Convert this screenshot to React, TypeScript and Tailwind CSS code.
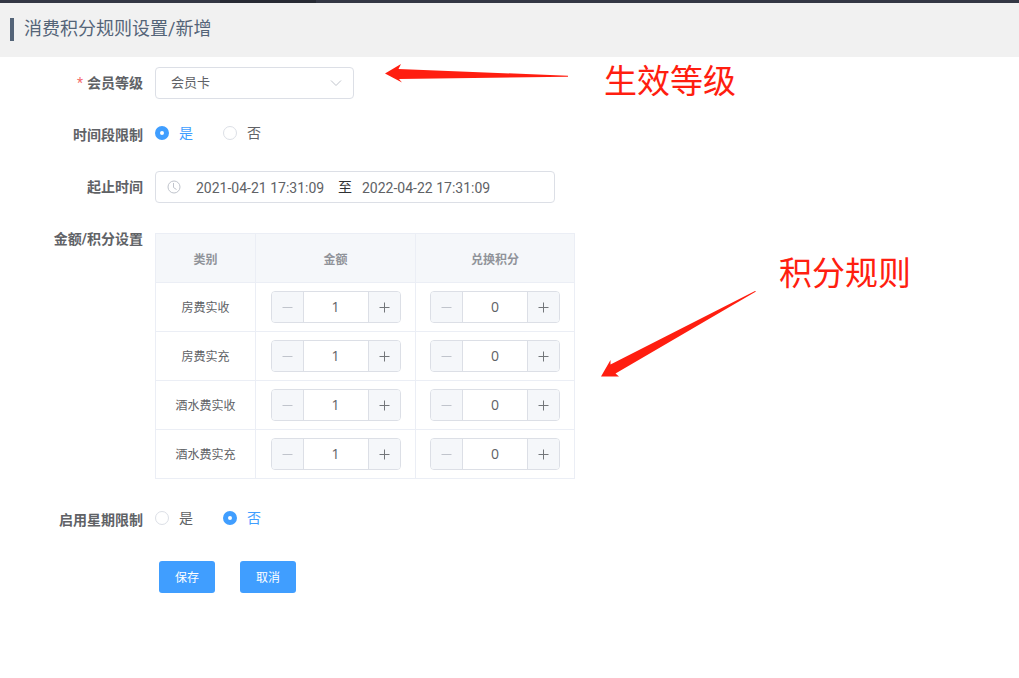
import React, { useState } from 'react';

interface StepperProps {
  label: string;
  value: number;
  min: number;
  onChange: (value: number) => void;
}

const Stepper: React.FC<StepperProps> = ({ label, value, min, onChange }) => {
  return (
    <div className="mx-auto flex h-8 w-[130px] overflow-hidden rounded border border-[#dcdfe6] bg-white">
      <button
        type="button"
        aria-label={`${label} 减少`}
        disabled={value <= min}
        onClick={() => onChange(value - 1)}
        className="flex w-8 shrink-0 items-center justify-center border-r border-[#dcdfe6] bg-[#f5f7fa] text-[#606266] disabled:text-[#c0c4cc]"
      >
        <svg width="11" height="11" viewBox="0 0 11 11" stroke="currentColor">
          <path d="M0.5 5.5h10" />
        </svg>
      </button>
      <input
        type="text"
        inputMode="numeric"
        aria-label={label}
        value={value}
        onChange={(e) => onChange(Number(e.target.value) || min)}
        className="w-full min-w-0 text-center font-['Open_Sans',sans-serif] text-sm text-[#606266] outline-none"
      />
      <button
        type="button"
        aria-label={`${label} 增加`}
        onClick={() => onChange(value + 1)}
        className="flex w-8 shrink-0 items-center justify-center border-l border-[#dcdfe6] bg-[#f5f7fa] text-[#73767a]"
      >
        <svg width="11" height="11" viewBox="0 0 11 11" stroke="currentColor">
          <path d="M0.5 5.5h10M5.5 0.5v10" />
        </svg>
      </button>
    </div>
  );
};

interface YesNoProps {
  name: string;
  value: string;
  onChange: (value: string) => void;
}

const YesNo: React.FC<YesNoProps> = ({ name, value, onChange }) => (
  <div role="radiogroup" aria-labelledby={`${name}-label`} className="flex h-7 items-center gap-[30px]">
    {['是', '否'].map((option) => (
      <label key={option} className="flex cursor-pointer items-center gap-2.5 text-sm">
        <input
          type="radio"
          name={name}
          checked={value === option}
          onChange={() => onChange(option)}
          className="peer size-3.5 appearance-none rounded-full border border-[#dcdfe6] bg-white checked:border-5 checked:border-[#409eff]"
        />
        <span className="text-[#606266] peer-checked:text-[#409eff]">{option}</span>
      </label>
    ))}
  </div>
);

interface FormRowProps {
  label: string;
  id?: string;
  htmlFor?: string;
  required?: boolean;
  children: React.ReactNode;
}

const FormRow: React.FC<FormRowProps> = ({ label, id, htmlFor, required, children }) => (
  <div className="flex gap-3">
    <label
      id={id}
      htmlFor={htmlFor}
      className="w-[143px] shrink-0 text-right text-sm leading-8 font-bold text-[#606266]"
    >
      {required && <span className="mr-1 font-normal text-[#f56c6c]">*</span>}
      {label}
    </label>
    <div className="min-w-0 flex-1">{children}</div>
  </div>
);

const initialRules = [
  { name: '房费实收', amount: 1, points: 0 },
  { name: '房费实充', amount: 1, points: 0 },
  { name: '酒水费实收', amount: 1, points: 0 },
  { name: '酒水费实充', amount: 1, points: 0 },
];

const cell = 'border-r border-b border-[#ebeef5]';

const App: React.FC = () => {
  const [timeLimit, setTimeLimit] = useState('是');
  const [weekLimit, setWeekLimit] = useState('否');
  const [start, setStart] = useState('2021-04-21 17:31:09');
  const [end, setEnd] = useState('2022-04-22 17:31:09');
  const [rules, setRules] = useState(initialRules);

  const updateRule = (index: number, patch: { amount?: number; points?: number }) => {
    setRules(rules.map((rule, i) => (i === index ? { ...rule, ...patch } : rule)));
  };

  return (
    <div
      lang="zh-CN"
      className="relative min-h-screen overflow-hidden bg-white font-[Roboto,'Noto_Sans_CJK_SC',sans-serif]"
    >
      <div className="h-[3px] bg-[#333744]">
        <div className="ml-[220px] h-full w-24 bg-[#272a33]" />
      </div>
      <header className="flex h-[54px] items-center bg-[#f1f1f1] pb-0.5 pl-2.5">
        <h1 className="flex items-center gap-2.5 text-lg leading-6 text-[#546478]">
          <span className="h-[23px] w-1 bg-[#546478]" />
          消费积分规则设置/新增
        </h1>
      </header>

      <form className="flex flex-col gap-5 pt-2.5" onSubmit={(e) => e.preventDefault()}>
        <FormRow label="会员等级" htmlFor="level" required>
          <div className="relative w-full max-w-[199px]">
            <select
              id="level"
              className="block h-8 w-full appearance-none rounded border border-[#dcdfe6] bg-white pr-8 pl-[15px] text-[13px] text-[#606266] outline-none"
            >
              <option>会员卡</option>
            </select>
            <svg
              className="pointer-events-none absolute top-3 right-3"
              width="12"
              height="8"
              viewBox="0 0 12 8"
              fill="none"
              stroke="#c0c4cc"
            >
              <path d="M1 1.500l5 5 5-5" />
            </svg>
          </div>
        </FormRow>

        <FormRow label="时间段限制" id="time-limit-label">
          <YesNo name="time-limit" value={timeLimit} onChange={setTimeLimit} />
        </FormRow>

        <FormRow label="起止时间" htmlFor="start">
          <div className="flex h-8 w-full max-w-[400px] items-center rounded border border-[#dcdfe6] pl-[11px] text-sm text-[#606266]">
            <svg className="shrink-0" width="14" height="14" viewBox="0 0 14 14" fill="none" stroke="#c0c4cc">
              <circle cx="7" cy="7" r="6" />
              <path d="M6.5 3v4.500l3 2" />
            </svg>
            <input
              id="start"
              type="text"
              value={start}
              onChange={(e) => setStart(e.target.value)}
              className="ml-[15px] w-[142px] min-w-0 pt-0.5 outline-none"
            />
            <span className="w-6 shrink-0 text-[#303133]">至</span>
            <input
              type="text"
              aria-label="结束时间"
              value={end}
              onChange={(e) => setEnd(e.target.value)}
              className="min-w-0 flex-1 pt-0.5 outline-none"
            />
          </div>
        </FormRow>

        <FormRow label="金额/积分设置">
          <table className="mt-2.5 w-full max-w-[420px] table-fixed border-separate border-spacing-0 border-t border-l border-[#ebeef5] text-center text-xs text-[#606266]">
            <colgroup>
              <col className="w-[100px]" />
              <col className="w-40" />
              <col />
            </colgroup>
            <thead>
              <tr className="h-[49px] bg-[#f5f7fa] text-[#909399]">
                <th className={`${cell} pt-1`}>类别</th>
                <th className={`${cell} pt-1`}>金额</th>
                <th className={`${cell} pt-1`}>兑换积分</th>
              </tr>
            </thead>
            <tbody>
              {rules.map((rule, i) => (
                <tr key={rule.name}>
                  <td className={`${cell} pt-0.5`}>{rule.name}</td>
                  <td className={`${cell} py-2`}>
                    <Stepper
                      label={`${rule.name} 金额`}
                      value={rule.amount}
                      min={1}
                      onChange={(amount) => updateRule(i, { amount })}
                    />
                  </td>
                  <td className={`${cell} py-2`}>
                    <Stepper
                      label={`${rule.name} 兑换积分`}
                      value={rule.points}
                      min={0}
                      onChange={(points) => updateRule(i, { points })}
                    />
                  </td>
                </tr>
              ))}
            </tbody>
          </table>
        </FormRow>

        <div className="mt-[5px]">
          <FormRow label="启用星期限制" id="week-limit-label">
            <YesNo name="week-limit" value={weekLimit} onChange={setWeekLimit} />
          </FormRow>
        </div>

        <div className="mt-[5px] ml-[159px] flex gap-[25px]">
          <button type="submit" className="h-8 w-14 rounded-[3px] bg-[#409eff] pt-0.5 text-xs text-white">
            保存
          </button>
          <button type="button" className="h-8 w-14 rounded-[3px] bg-[#409eff] pt-0.5 text-xs text-white">
            取消
          </button>
        </div>
      </form>

      {/* callouts */}
      <svg className="pointer-events-none absolute top-16 left-[385px]" width="184" height="19" fill="#ff1e10">
        <path d="M0 9.500L16 0l-2.500 5L183 11.700v1L14 15l3 3.500z" />
      </svg>
      <p className="pointer-events-none absolute top-[62px] left-[604px] text-[33px] leading-10 whitespace-nowrap text-[#ff1e10]">
        生效等级
      </p>
      <svg className="pointer-events-none absolute top-[290px] left-[600px]" width="157" height="88" fill="#ff1e10">
        <path d="M1 86.500L10.500 70v4.500L155 1l1 .5L15.500 83.500l3.500 3z" />
      </svg>
      <p className="pointer-events-none absolute top-[254px] left-[779px] text-[33px] leading-10 whitespace-nowrap text-[#ff1e10]">
        积分规则
      </p>
    </div>
  );
};

export default App;
